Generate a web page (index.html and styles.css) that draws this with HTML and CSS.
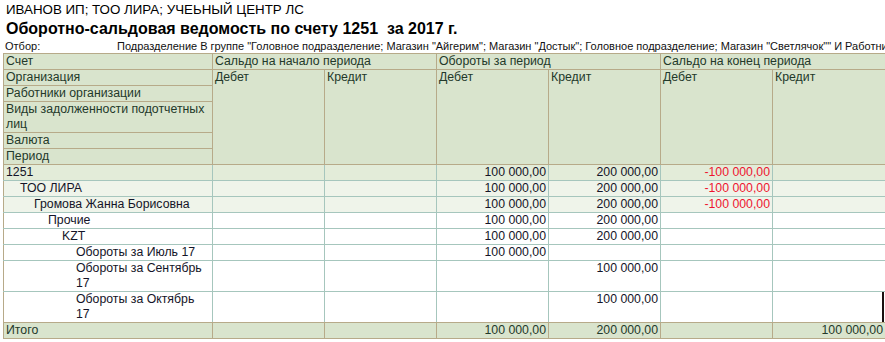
FILE: index.html
```html
<!DOCTYPE html>
<html lang="ru">
<head>
<meta charset="utf-8">
<title>Оборотно-сальдовая ведомость</title>
<link rel="stylesheet" href="styles.css">
</head>
<body>
<div class="report">
  <div class="org">ИВАНОВ ИП; ТОО ЛИРА; УЧЕЬНЫЙ ЦЕНТР ЛС</div>
  <div class="title">Оборотно-сальдовая ведомость по счету 1251&nbsp; за 2017 г.</div>
  <div class="filter"><span class="filter-label">Отбор:</span><span class="filter-value">Подразделение В группе "Головное подразделение; Магазин "Айгерим"; Магазин "Достык"; Головное подразделение; Магазин "Светлячок"" И Работники организации</span></div>
  <table class="grid">
    <colgroup>
      <col class="c-name"><col class="c-num"><col class="c-num"><col class="c-num"><col class="c-num"><col class="c-num"><col class="c-last">
    </colgroup>
    <thead>
      <tr>
        <th class="h-name">Счет</th>
        <th colspan="2">Сальдо на начало периода</th>
        <th colspan="2">Обороты за период</th>
        <th colspan="2">Сальдо на конец периода</th>
      </tr>
      <tr>
        <th class="h-name">Организация</th>
        <th rowspan="5" class="h-sub">Дебет</th>
        <th rowspan="5" class="h-sub">Кредит</th>
        <th rowspan="5" class="h-sub">Дебет</th>
        <th rowspan="5" class="h-sub">Кредит</th>
        <th rowspan="5" class="h-sub">Дебет</th>
        <th rowspan="5" class="h-sub">Кредит</th>
      </tr>
      <tr><th class="h-name">Работники организации</th></tr>
      <tr><th class="h-name">Виды задолженности подотчетных лиц</th></tr>
      <tr><th class="h-name">Валюта</th></tr>
      <tr><th class="h-name h-last">Период</th></tr>
    </thead>
    <tbody>
      <tr class="lvl0">
        <td class="name l0">1251</td><td></td><td></td><td class="num">100 000,00</td><td class="num">200 000,00</td><td class="num neg">-100 000,00</td><td></td>
      </tr>
      <tr class="lvl1">
        <td class="name l1">ТОО ЛИРА</td><td></td><td></td><td class="num">100 000,00</td><td class="num">200 000,00</td><td class="num neg">-100 000,00</td><td></td>
      </tr>
      <tr class="lvl1">
        <td class="name l2">Громова Жанна Борисовна</td><td></td><td></td><td class="num">100 000,00</td><td class="num">200 000,00</td><td class="num neg">-100 000,00</td><td></td>
      </tr>
      <tr>
        <td class="name l3">Прочие</td><td></td><td></td><td class="num">100 000,00</td><td class="num">200 000,00</td><td></td><td></td>
      </tr>
      <tr>
        <td class="name l4">KZT</td><td></td><td></td><td class="num">100 000,00</td><td class="num">200 000,00</td><td></td><td></td>
      </tr>
      <tr>
        <td class="name l5">Обороты за Июль 17</td><td></td><td></td><td class="num">100 000,00</td><td></td><td></td><td></td>
      </tr>
      <tr>
        <td class="name l5">Обороты за Сентябрь 17</td><td></td><td></td><td></td><td class="num">100 000,00</td><td></td><td></td>
      </tr>
      <tr>
        <td class="name l5">Обороты за Октябрь 17</td><td></td><td></td><td></td><td class="num">100 000,00</td><td></td><td class="cursor-cell"></td>
      </tr>
    </tbody>
    <tfoot>
      <tr>
        <td class="name">Итого</td><td></td><td></td><td class="num">100 000,00</td><td class="num">200 000,00</td><td></td><td class="num">100 000,00</td>
      </tr>
    </tfoot>
  </table>
</div>
</body>
</html>
```
FILE: styles.css
```css
html, body {
  margin: 0;
  padding: 0;
  background: #ffffff;
}

body {
  font-family: "Liberation Sans", Arial, sans-serif;
  color: #000;
  width: 885px;
  height: 342px;
  overflow: hidden;
}

.report {
  display: flex;
  flex-direction: column;
  padding-top: 2px;
}

.org {
  font-size: 13.33px;
  line-height: 16px;
  height: 16px;
  padding-left: 6px;
  white-space: nowrap;
}

.title {
  font-size: 16px;
  font-weight: bold;
  line-height: 22px;
  height: 22px;
  padding-left: 6px;
  white-space: nowrap;
}

.filter {
  display: flex;
  font-size: 11px;
  line-height: 13px;
  height: 13px;
  padding-left: 5px;
  white-space: nowrap;
  overflow: hidden;
  color: #111;
}

.filter-label {
  width: 112px;
  flex: none;
}

.grid {
  margin-left: 3px;
  border-collapse: collapse;
  table-layout: fixed;
  width: 882px;
  font-size: 12.3px;
  line-height: 15px;
}

.c-name { width: 209px; }
.c-num { width: 112px; }
.c-last { width: 113px; }

.grid th,
.grid td {
  padding: 0 2px;
  vertical-align: top;
  overflow: hidden;
  white-space: normal;
  text-align: left;
}

.grid th {
  font-weight: normal;
  background: #d9e4cd;
  color: #23392a;
  border: 1px solid #b7aa89;
  height: 15px;
}

.grid tbody td {
  border: 1px solid #a6c6bd;
  height: 15px;
  color: #141428;
  background: #ffffff;
}

.grid tbody tr.lvl0 td { background: #e3ecd9; }
.grid tbody tr.lvl1 td { background: #eff4ea; }

.grid tbody tr:first-child td { border-top-color: #b7aa89; }
.grid tbody td.name { border-left-color: #b7aa89; }
.grid tbody tr:last-child td { border-bottom-color: #b7aa89; }

.grid tbody tr td:last-child { border-right-color: transparent; }

.grid tfoot td {
  background: #d9e4cd;
  border: 1px solid #b7aa89;
  color: #23392a;
  height: 15px;
}

.grid tfoot tr td:last-child { border-right-color: transparent; }

.grid thead tr th:last-child { border-right-color: transparent; }

.grid .num { text-align: right; }
.grid .neg { color: #ee1430; }

.l0 { padding-left: 2px; }
.grid td.l1 { padding-left: 16px; }
.grid td.l2 { padding-left: 30px; }
.grid td.l3 { padding-left: 44px; }
.grid td.l4 { padding-left: 58px; }
.grid td.l5 { padding-left: 72px; }

.cursor-cell {
  position: relative;
}

.cursor-cell::after {
  content: "";
  position: absolute;
  right: 1px;
  top: 0;
  bottom: -1px;
  width: 2px;
  background: #1a1010;
}
```
